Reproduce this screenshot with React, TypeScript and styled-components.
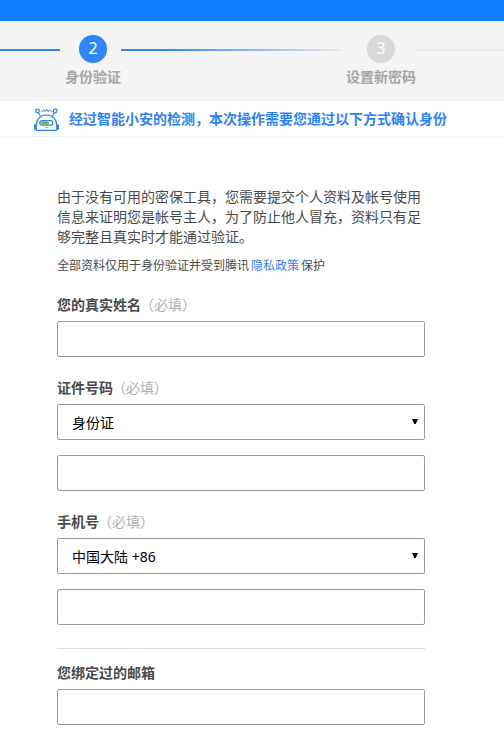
import React from "react";
import styled, { createGlobalStyle } from "styled-components";

const GlobalStyle = createGlobalStyle`
  *, *::before, *::after { box-sizing: border-box; }
  body {
    margin: 0;
    background: #fff;
    color: #4a4a4a;
    font-family: "Noto Sans CJK SC", sans-serif;
    font-size: 14px;
    line-height: 20px;
    overflow: hidden;
  }
`;

const TopBar = styled.header`
  height: 21px;
  background: #107cfb;
`;

const Stepper = styled.nav`
  display: flex;
  height: 80px;
  background: #f4f4f4;
`;

const Track = styled.div<{ $width: number; $fill: string }>`
  flex: none;
  width: ${(p) => p.$width}px;
  height: 2px;
  margin-top: 28px;
  background: ${(p) => p.$fill};
`;

const Step = styled.div`
  flex: none;
  display: flex;
  flex-direction: column;
  align-items: center;
  margin: 14px 0 0 5px;
`;

const StepNumber = styled.span<{ $active?: boolean }>`
  width: 28px;
  height: 28px;
  border-radius: 50%;
  background: ${(p) => (p.$active ? "#2f86f6" : "#d9d9d9")};
  color: #fff;
  font: 16px/27px "Noto Sans", sans-serif;
  text-align: center;
`;

const StepLabel = styled.span`
  margin-top: 3px;
  color: #a5a5a5;
  font-weight: 700;
  white-space: nowrap;
`;

const Notice = styled.div`
  display: flex;
  height: 36px;
  padding: 6px 0 0 33px;
  border-bottom: 1px solid #e6f2fd;
  color: #2f82f7;
  font-weight: 700;
  white-space: nowrap;

  svg { flex: none; margin-right: 9px; }
  span { margin-top: 1px; }
`;

const Form = styled.form`
  width: 368px;
  margin: 49px 0 0 57px;
`;

const Intro = styled.p`
  margin: 0;
  white-space: nowrap;
`;

const Privacy = styled.p`
  margin: 9px 0 19px;
  font-size: 12px;

  a { margin: 0 2px; color: #3580f7; text-decoration: none; }
`;

const Field = styled.section`
  display: flex;
  flex-direction: column;
  margin-bottom: 20px;
`;

const Label = styled.label`
  height: 20px;
  margin-bottom: 7px;
  font-weight: 700;
`;

const Required = styled.span`
  margin-left: -1px;
  color: #b2b2b2;
  font-weight: 400;
`;

const Input = styled.input`
  width: 100%;
  height: 36px;
  padding: 0 14px;
  border: 1px solid #979ca5;
  border-radius: 2px;
  background: #fff;
  font: inherit;
  outline: none;

  & + & { margin-top: 15px; }
`;

const Picker = styled.button`
  display: flex;
  align-items: center;
  justify-content: space-between;
  width: 100%;
  height: 36px;
  margin-bottom: 15px;
  padding: 2px 6px 0 14px;
  border: 1px solid #979ca5;
  border-radius: 2px;
  background: #fff;
  color: #000;
  font: 14px/20px "Noto Sans", "Noto Sans CJK SC", sans-serif;

  svg { margin-top: -3px; }
`;

const Divider = styled.hr`
  height: 1px;
  margin: 23px 0 13px;
  border: 0;
  background: #d8d8d8;
`;

const Robot = () => (
  <svg width="27" height="26" viewBox="0 0 27 26" fill="none" stroke="#2c80f2" strokeWidth="1.2">
    <circle cx="4.5" cy="4" r="1.8" />
    <circle cx="22.2" cy="4" r="1.8" />
    <path d="m5.5 5.8 1.7 3M21.2 5.8l-1.7 3" />
    <path d="M8 4.2h2l1-1.5 1.4 2.2 1.3-2.8 1.6 3 1.2-2.4 1 1.5h2" strokeWidth=".8" />
    <path d="M3.2 22.8v-4.3C3.2 12.3 7.4 8 13.5 8s10.2 4.3 10.2 10.5v4.3q0 .6-.7.6H4q-.8 0-.8-.6Z" />
    <path d="M2 17.5v5.2M25 17.5v5.2" strokeWidth="2" />
    <rect x="6.8" y="13.7" width="13" height="4.4" rx="2.2" fill="#fff" />
    <rect x="8" y="14.4" width="8" height="3" rx="1" fill="#65cd31" stroke="none" />
    <path d="M10.5 14.4v3M13.3 14.4v3" stroke="#2c9a40" strokeWidth=".6" />
    <path d="M11.4 20.4h4" stroke="#8db9f5" strokeWidth=".9" />
  </svg>
);

const Select = ({ value }: { value: string }) => (
  <Picker type="button">
    <span>{value}</span>
    <svg width="6" height="5" viewBox="0 0 6 5">
      <path d="M0 0h6L3.7 5H2.3Z" fill="#000" />
    </svg>
  </Picker>
);

const FieldLabel = ({ text }: { text: string }) => (
  <Label>
    {text}
    <Required>（必填）</Required>
  </Label>
);

export default function App() {
  return (
    <>
      <GlobalStyle />
      <TopBar />
      <Stepper>
        <Track $width={60} $fill="#2f86f6" />
        <Step>
          <StepNumber $active>2</StepNumber>
          <StepLabel>身份验证</StepLabel>
        </Step>
        <Track $width={220} $fill="linear-gradient(90deg, #2f86f6 20%, #e9e9e9)" />
        <Step>
          <StepNumber>3</StepNumber>
          <StepLabel>设置新密码</StepLabel>
        </Step>
        <Track $width={88} $fill="#e9e9e9" />
      </Stepper>
      <Notice>
        <Robot />
        <span>经过智能小安的检测，本次操作需要您通过以下方式确认身份</span>
      </Notice>
      <Form>
        <Intro>
          由于没有可用的密保工具，您需要提交个人资料及帐号使用
          <br />
          信息来证明您是帐号主人，为了防止他人冒充，资料只有足
          <br />
          够完整且真实时才能通过验证。
        </Intro>
        <Privacy>
          全部资料仅用于身份验证并受到腾讯<a href="#privacy">隐私政策</a>保护
        </Privacy>
        <Field>
          <FieldLabel text="您的真实姓名" />
          <Input />
        </Field>
        <Field>
          <FieldLabel text="证件号码" />
          <Select value="身份证" />
          <Input />
        </Field>
        <Field>
          <FieldLabel text="手机号" />
          <Select value="中国大陆 +86" />
          <Input />
        </Field>
        <Divider />
        <Field>
          <Label>您绑定过的邮箱</Label>
          <Input />
        </Field>
      </Form>
    </>
  );
}
